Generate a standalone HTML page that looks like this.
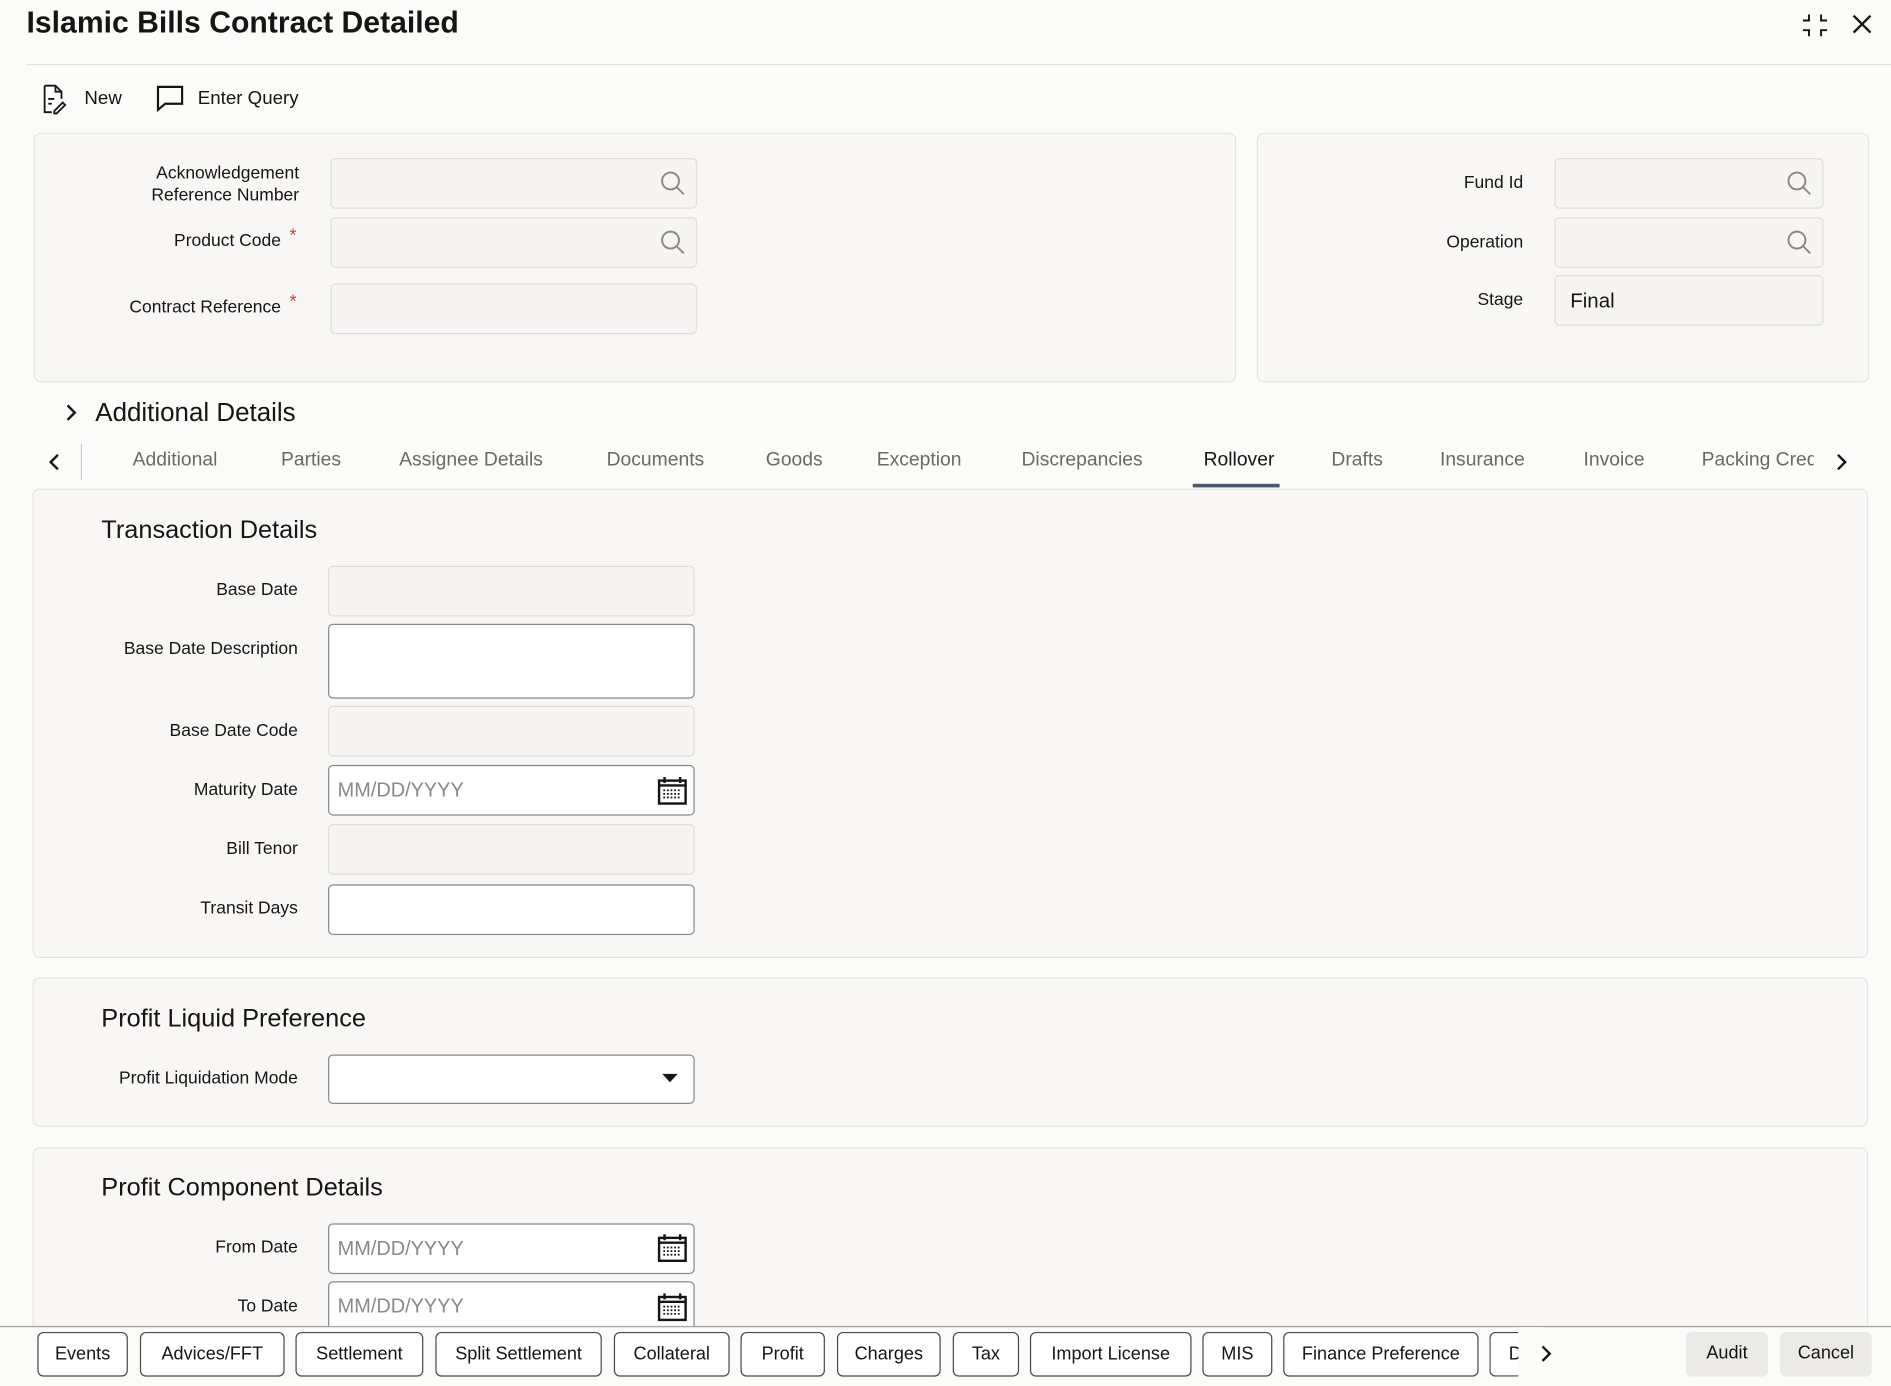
<!DOCTYPE html>
<html><head><meta charset="utf-8"><style>
html,body{margin:0;padding:0;width:1891px;height:1385px;overflow:hidden;background:#fbfbfa}
#w{position:absolute;left:0;top:0;width:1568px;height:1148px;transform:scale(1.206,1.2065);transform-origin:0 0;font-family:"Liberation Sans",sans-serif;color:#161513}
.a{position:absolute}
.p{position:absolute;background:#f8f7f6;border:1px solid #e6e4e1;border-radius:6px}
.l{position:absolute;font-size:14.5px;text-align:right;white-space:nowrap}
.i{position:absolute;border-radius:4px;box-sizing:border-box}
.g{background:#f6f5f4;border:1px solid #e0dedb}
.wb{background:#fff;border:1px solid #8a8885}
.h{position:absolute;font-size:21px;color:#161513}
.t{position:absolute;top:373px;font-size:16px;color:#6b6966;white-space:nowrap}
.b{position:absolute;top:1104px;height:37px;box-sizing:border-box;border:1px solid #4a4845;border-radius:5px;background:#fff;font-size:15px;line-height:35px;text-align:center;white-space:nowrap;overflow:hidden}
.ph{position:absolute;left:7px;top:11px;font-size:16.5px;color:#8a8885}
.star{color:#c74634;font-size:15px;position:absolute}
</style></head><body><div id="w">
<div class="a" style="left:22px;top:5px;font-size:25px;font-weight:bold">Islamic Bills Contract Detailed</div>
<svg class="a" style="left:1492px;top:8px" width="26" height="26" viewBox="0 0 26 26" fill="none" stroke="#161513" stroke-width="1.6"><path d="M3 9h5V4M18 4v5h5M3 17h5v5M18 22v-5h5"/></svg>
<svg class="a" style="left:1535px;top:11px" width="18" height="18" viewBox="0 0 18 18" stroke="#161513" stroke-width="2"><path d="M2 2l14 14M16 2L2 16"/></svg>
<div class="a" style="left:22px;top:53px;width:1546px;height:1px;background:#e2e0dd"></div>
<svg class="a" style="left:34px;top:69px" width="24" height="26" viewBox="0 0 24 26" fill="none" stroke="#161513" stroke-width="1.5"><path d="M3 2h9l5 5v6M12 2v5h5M3 2v22h6M6 13h5M6 17h3M11 23l7-7 2 2-7 7h-2z"/></svg>
<div class="a" style="left:70px;top:73px;font-size:15.5px">New</div>
<svg class="a" style="left:128px;top:69px" width="26" height="24" viewBox="0 0 26 24" fill="none" stroke="#161513" stroke-width="1.8"><path d="M3 3h20v14H9l-6 5z"/></svg>
<div class="a" style="left:164px;top:73px;font-size:15.5px">Enter Query</div>

<div class="p" style="left:28px;top:110px;width:995px;height:205px"></div>
<div class="p" style="left:1042px;top:110px;width:506px;height:205px"></div>
<div class="l" style="right:1320px;top:135px;line-height:18px">Acknowledgement<br>Reference Number</div>
<div class="i g" style="left:274px;top:131px;width:304px;height:42px"></div>
<div class="l" style="right:1335px;top:192px">Product Code</div><span class="star" style="left:240px;top:187px">*</span>
<div class="i g" style="left:274px;top:180px;width:304px;height:42px"></div>
<div class="l" style="right:1335px;top:247px">Contract Reference</div><span class="star" style="left:240px;top:242px">*</span>
<div class="i g" style="left:274px;top:235px;width:304px;height:42px"></div>
<div class="l" style="right:305px;top:144px">Fund Id</div>
<div class="i g" style="left:1289px;top:131px;width:223px;height:42px"></div>
<div class="l" style="right:305px;top:193px">Operation</div>
<div class="i g" style="left:1289px;top:180px;width:223px;height:42px"></div>
<div class="l" style="right:305px;top:241px">Stage</div>
<div class="i g" style="left:1289px;top:228px;width:223px;height:42px"><span class="a" style="left:12px;top:11px;font-size:17px">Final</span></div>
<svg class="a" style="left:546px;top:140px" width="24" height="24" viewBox="0 0 24 24" fill="none" stroke="#8a8885" stroke-width="1.6"><circle cx="10" cy="10" r="7"/><path d="M15 15l6 6"/></svg>
<svg class="a" style="left:546px;top:189px" width="24" height="24" viewBox="0 0 24 24" fill="none" stroke="#8a8885" stroke-width="1.6"><circle cx="10" cy="10" r="7"/><path d="M15 15l6 6"/></svg>
<svg class="a" style="left:1480px;top:140px" width="24" height="24" viewBox="0 0 24 24" fill="none" stroke="#8a8885" stroke-width="1.6"><circle cx="10" cy="10" r="7"/><path d="M15 15l6 6"/></svg>
<svg class="a" style="left:1480px;top:189px" width="24" height="24" viewBox="0 0 24 24" fill="none" stroke="#8a8885" stroke-width="1.6"><circle cx="10" cy="10" r="7"/><path d="M15 15l6 6"/></svg>

<svg class="a" style="left:52px;top:334px" width="14" height="16" viewBox="0 0 14 16" fill="none" stroke="#161513" stroke-width="2"><path d="M4 2l6 6-6 6"/></svg>
<div class="a" style="left:79px;top:330px;font-size:21.5px">Additional Details</div>
<svg class="a" style="left:38px;top:375px" width="14" height="16" viewBox="0 0 14 16" fill="none" stroke="#161513" stroke-width="2"><path d="M10 2L4 8l6 6"/></svg>
<div class="a" style="left:67px;top:368px;width:1px;height:30px;background:#ccc"></div>
<div class="t" style="left:110px">Additional</div>
<div class="t" style="left:233px">Parties</div>
<div class="t" style="left:331px">Assignee Details</div>
<div class="t" style="left:503px">Documents</div>
<div class="t" style="left:635px">Goods</div>
<div class="t" style="left:727px">Exception</div>
<div class="t" style="left:847px">Discrepancies</div>
<div class="t" style="left:998px;color:#161513">Rollover</div>
<div class="a" style="left:989px;top:401px;width:72px;height:3px;background:#4a5a6a"></div>
<div class="t" style="left:1104px">Drafts</div>
<div class="t" style="left:1194px">Insurance</div>
<div class="t" style="left:1313px">Invoice</div>
<div class="t" style="left:1411px;width:93px;overflow:hidden">Packing Credit</div>
<svg class="a" style="left:1520px;top:375px" width="14" height="16" viewBox="0 0 14 16" fill="none" stroke="#161513" stroke-width="2"><path d="M4 2l6 6-6 6"/></svg>

<div class="p" style="left:27px;top:405px;width:1520px;height:387px"></div>
<div class="h" style="left:84px;top:428px">Transaction Details</div>
<div class="l" style="right:1321px;top:481px">Base Date</div>
<div class="i g" style="left:272px;top:469px;width:304px;height:42px"></div>
<div class="l" style="right:1321px;top:530px">Base Date Description</div>
<div class="i wb" style="left:272px;top:517px;width:304px;height:62px"></div>
<div class="l" style="right:1321px;top:598px">Base Date Code</div>
<div class="i g" style="left:272px;top:585px;width:304px;height:42px"></div>
<div class="l" style="right:1321px;top:647px">Maturity Date</div>
<div class="i wb" style="left:272px;top:634px;width:304px;height:42px"><span class="ph">MM/DD/YYYY</span></div>
<div class="l" style="right:1321px;top:696px">Bill Tenor</div>
<div class="i g" style="left:272px;top:683px;width:304px;height:42px"></div>
<div class="l" style="right:1321px;top:745px">Transit Days</div>
<div class="i wb" style="left:272px;top:733px;width:304px;height:42px"></div>

<div class="p" style="left:27px;top:810px;width:1520px;height:122px"></div>
<div class="h" style="left:84px;top:833px">Profit Liquid Preference</div>
<div class="l" style="right:1321px;top:886px">Profit Liquidation Mode</div>
<div class="i wb" style="left:272px;top:874px;width:304px;height:41px"></div>
<svg class="a" style="left:549px;top:890px" width="14" height="8"><path d="M0 0h13L6.5 7z" fill="#161513"/></svg>

<div class="p" style="left:27px;top:951px;width:1520px;height:160px"></div>
<div class="h" style="left:84px;top:973px">Profit Component Details</div>
<div class="l" style="right:1321px;top:1026px">From Date</div>
<div class="i wb" style="left:272px;top:1014px;width:304px;height:42px"><span class="ph">MM/DD/YYYY</span></div>
<div class="l" style="right:1321px;top:1075px">To Date</div>
<div class="i wb" style="left:272px;top:1062px;width:304px;height:42px"><span class="ph">MM/DD/YYYY</span></div>
<svg class="a" style="left:545px;top:643px" width="25" height="25" viewBox="0 0 25 25"><rect x="1.5" y="4" width="22" height="19" fill="none" stroke="#161513" stroke-width="2"/><path d="M6 1v5M19 1v5M1 8h23" stroke="#161513" stroke-width="2"/><path d="M5 12h15M5 15h15M5 18h15" stroke="#161513" stroke-width="1.5" stroke-dasharray="1.5 1.5"/></svg>
<svg class="a" style="left:545px;top:1022px" width="25" height="25" viewBox="0 0 25 25"><rect x="1.5" y="4" width="22" height="19" fill="none" stroke="#161513" stroke-width="2"/><path d="M6 1v5M19 1v5M1 8h23" stroke="#161513" stroke-width="2"/><path d="M5 12h15M5 15h15M5 18h15" stroke="#161513" stroke-width="1.5" stroke-dasharray="1.5 1.5"/></svg>

<div class="a" style="left:0;top:1099px;width:1568px;height:49px;background:#fbfbfa;border-top:1px solid #a8a6a3"></div>
<svg class="a" style="left:545px;top:1071px" width="25" height="25" viewBox="0 0 25 25"><rect x="1.5" y="4" width="22" height="19" fill="none" stroke="#161513" stroke-width="2"/><path d="M6 1v5M19 1v5M1 8h23" stroke="#161513" stroke-width="2"/><path d="M5 12h15M5 15h15M5 18h15" stroke="#161513" stroke-width="1.5" stroke-dasharray="1.5 1.5"/></svg>
<div class="a" style="left:0;top:1099px;width:1568px;height:1px;background:#a8a6a3"></div>
<div class="b" style="left:31px;width:75px">Events</div>
<div class="b" style="left:116px;width:120px">Advices/FFT</div>
<div class="b" style="left:245px;width:106px">Settlement</div>
<div class="b" style="left:361px;width:138px">Split Settlement</div>
<div class="b" style="left:509px;width:96px">Collateral</div>
<div class="b" style="left:614px;width:70px">Profit</div>
<div class="b" style="left:694px;width:86px">Charges</div>
<div class="b" style="left:790px;width:55px">Tax</div>
<div class="b" style="left:854px;width:134px">Import License</div>
<div class="b" style="left:997px;width:58px">MIS</div>
<div class="b" style="left:1064px;width:162px">Finance Preference</div>
<div class="b" style="left:1235px;width:40px;text-align:left;padding-left:15px;border-right:none;border-radius:5px 0 0 5px">D</div>
<div class="a" style="left:1259px;top:1100px;width:20px;height:46px;background:#fbfbfa"></div>
<svg class="a" style="left:1275px;top:1114px" width="14" height="16" viewBox="0 0 14 16" fill="none" stroke="#161513" stroke-width="2"><path d="M4 2l6 6-6 6"/></svg>
<div class="b" style="left:1398px;width:68px;border:none;background:#ebeae8">Audit</div>
<div class="b" style="left:1476px;width:76px;border:none;background:#ebeae8">Cancel</div>
</div></body></html>
